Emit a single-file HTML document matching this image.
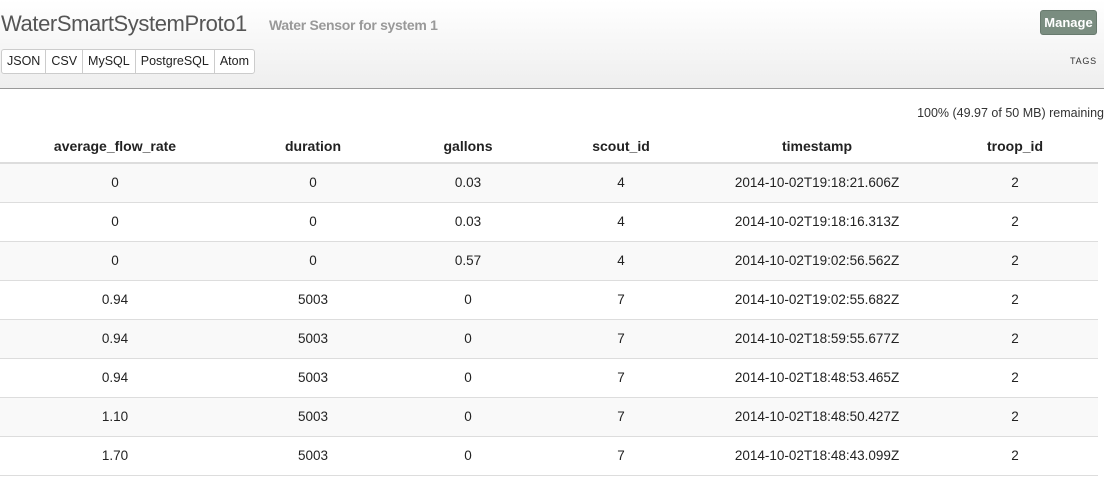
<!DOCTYPE html>
<html><head><meta charset="utf-8"><style>
*{box-sizing:border-box;margin:0;padding:0}
body{width:1104px;height:483px;overflow:hidden;background:#fff;font-family:"Liberation Sans",sans-serif;color:#222;position:relative}
.hdr{position:absolute;left:0;top:0;width:1104px;height:89px;background:linear-gradient(#fff,#eeeeee);border-bottom:1px solid #999}
.title{position:absolute;left:1px;top:11px;font-size:22px;color:#555;letter-spacing:-0.4px}
.sub{position:absolute;left:269px;top:17px;font-size:14px;color:#999;font-weight:bold;letter-spacing:-0.3px}
.btns{position:absolute;left:1px;top:49px;height:25px;display:flex;border:1px solid #ccc;border-radius:3px;background:#fff}
.btns span{font-size:12.5px;padding:0 5px;line-height:23px;border-right:1px solid #ccc;color:#222}
.btns span:last-child{border-right:none}
.manage{position:absolute;left:1040px;top:10px;width:57px;height:25px;background:#7a8d80;border:1px solid #687a6e;border-radius:3px;color:#fff;font-weight:bold;font-size:13px;line-height:23px;text-align:center}
.tags{position:absolute;right:7px;top:56px;font-size:9px;letter-spacing:0.8px;color:#333}
.rem{position:absolute;right:0;top:106px;font-size:12.5px;color:#333}
table{position:absolute;left:0;top:129px;width:1098px;border-collapse:collapse;table-layout:fixed}
th{height:34px;font-size:14px;font-weight:bold;border-bottom:2px solid #ddd;text-align:center;vertical-align:middle;padding-top:0}
td{height:39px;font-size:13.5px;text-align:center;border-bottom:1px solid #ddd;vertical-align:middle}
tr:nth-child(odd) td{background:#f9f9f9}
</style></head><body>
<div class="hdr">
<div class="title">WaterSmartSystemProto1</div>
<div class="sub">Water Sensor for system 1</div>
<div class="btns"><span>JSON</span><span>CSV</span><span>MySQL</span><span>PostgreSQL</span><span>Atom</span></div>
<div class="manage">Manage</div>
<div class="tags">TAGS</div>
</div>
<div class="rem">100% (49.97 of 50 MB) remaining</div>
<table>
<colgroup><col style="width:230px"><col style="width:166px"><col style="width:144px"><col style="width:162px"><col style="width:230px"><col style="width:166px"></colgroup>
<thead><tr><th>average_flow_rate</th><th>duration</th><th>gallons</th><th>scout_id</th><th>timestamp</th><th>troop_id</th></tr></thead>
<tbody>
<tr><td>0</td><td>0</td><td>0.03</td><td>4</td><td>2014-10-02T19:18:21.606Z</td><td>2</td></tr>
<tr><td>0</td><td>0</td><td>0.03</td><td>4</td><td>2014-10-02T19:18:16.313Z</td><td>2</td></tr>
<tr><td>0</td><td>0</td><td>0.57</td><td>4</td><td>2014-10-02T19:02:56.562Z</td><td>2</td></tr>
<tr><td>0.94</td><td>5003</td><td>0</td><td>7</td><td>2014-10-02T19:02:55.682Z</td><td>2</td></tr>
<tr><td>0.94</td><td>5003</td><td>0</td><td>7</td><td>2014-10-02T18:59:55.677Z</td><td>2</td></tr>
<tr><td>0.94</td><td>5003</td><td>0</td><td>7</td><td>2014-10-02T18:48:53.465Z</td><td>2</td></tr>
<tr><td>1.10</td><td>5003</td><td>0</td><td>7</td><td>2014-10-02T18:48:50.427Z</td><td>2</td></tr>
<tr><td>1.70</td><td>5003</td><td>0</td><td>7</td><td>2014-10-02T18:48:43.099Z</td><td>2</td></tr>
</tbody></table>
</body></html>
